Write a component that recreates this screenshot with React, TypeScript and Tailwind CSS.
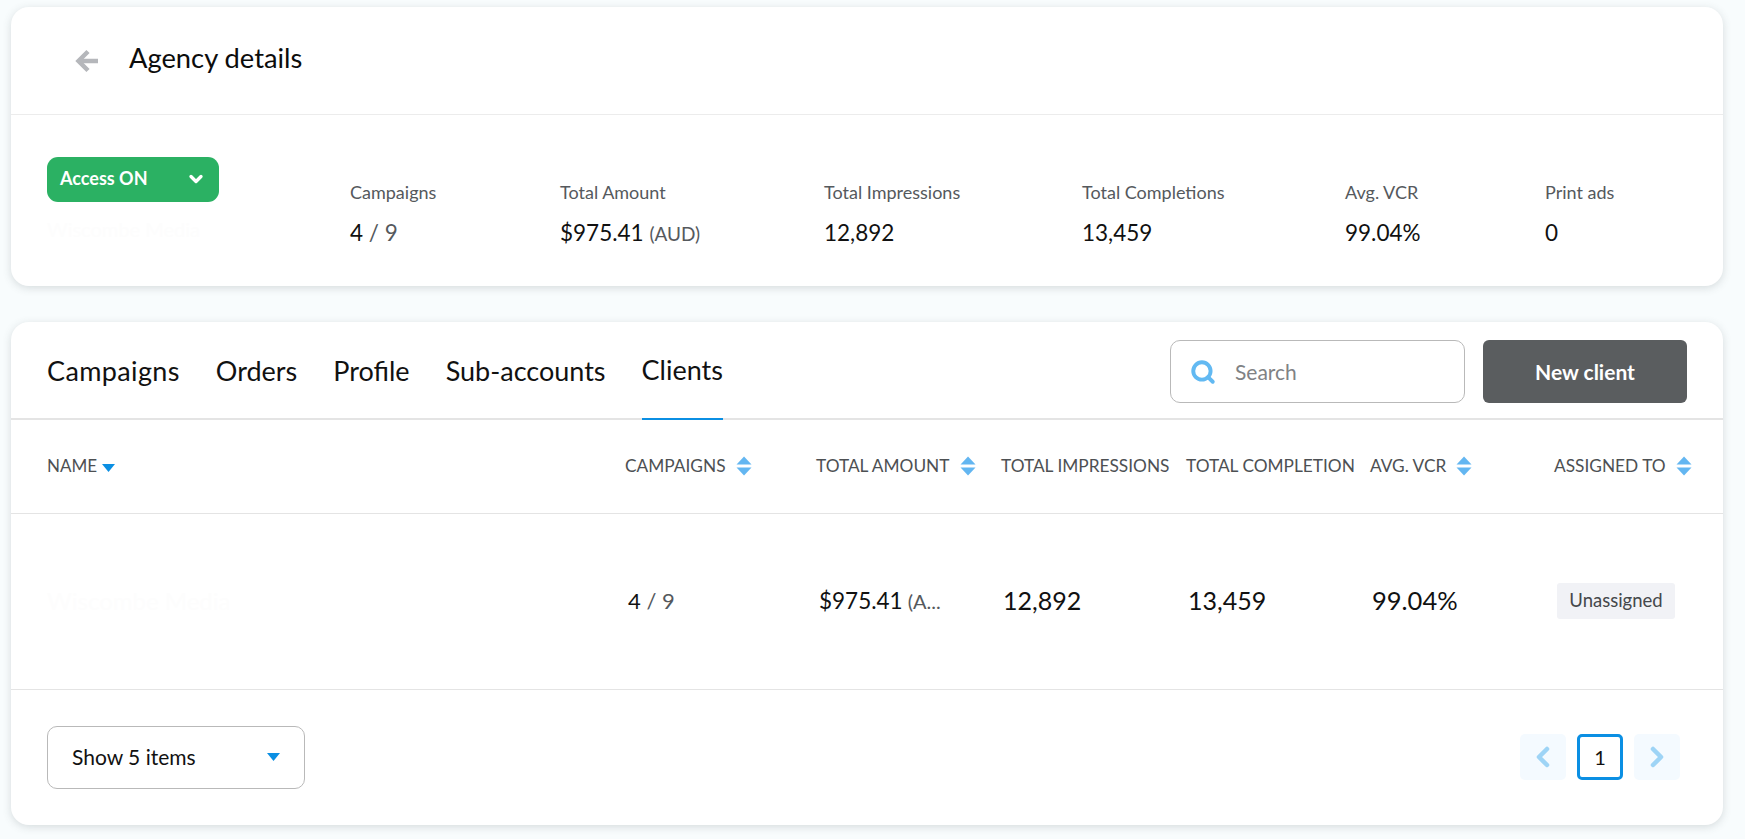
import { ChevronDown, ChevronLeft, ChevronRight, Search } from "lucide-react";

const font = "font-['Lato','Open_Sans',sans-serif]";

function SortIcon() {
  return (
    <svg width="16" height="20" viewBox="0 0 16 20" className="shrink-0 text-[#63b6f1]" fill="currentColor">
      <path d="M8 0.5 15.5 8.5H0.5Z" />
      <path d="M8 19.5 15.5 11.5H0.5Z" />
    </svg>
  );
}

function SortDown() {
  return (
    <svg width="13" height="8" viewBox="0 0 13 8" className="mt-1 shrink-0 text-[#0b8fe3]" fill="currentColor">
      <path d="M0 0H13L6.5 8Z" />
    </svg>
  );
}

function BackArrow() {
  return (
    <svg width="24" height="24" viewBox="0 0 24 24" fill="none" stroke="#b5b7bb" strokeWidth="4.5">
      <path d="M13 2.5 3.5 12l9.5 9.5" />
      <path d="M4 12h19" />
    </svg>
  );
}

function Stat({ label, width, children }: { label: string; width: string; children: React.ReactNode }) {
  return (
    <div className={width}>
      <div className="text-[18px] leading-5 text-[#55595d]">{label}</div>
      <div className="mt-[19px] text-[22.5px] leading-6 text-[#111]">{children}</div>
    </div>
  );
}

function Th({ label, sort = true }: { label: string; sort?: boolean }) {
  return (
    <div className="flex items-center gap-[10px] whitespace-nowrap text-[17.3px] text-[#4d5053]">
      <span>{label}</span>
      {sort && <SortIcon />}
    </div>
  );
}

export default function App() {
  return (
    <div className={`${font} h-[839px] overflow-hidden bg-[#f8fcfd] pl-[11px] pr-[22px] pt-[7px]`}>
      <div className="h-[279px] rounded-[18px] bg-white shadow-[0_2px_8px_rgba(60,70,80,0.18)]">
        <div className="flex h-[108px] items-center border-b border-[#ececec] pl-[64px]">
          <BackArrow />
          <h1 className="mb-[4px] ml-[30px] text-[27.3px] font-normal text-[#0c0c0c]">Agency details</h1>
        </div>
        <div className="flex pl-[36px] pt-[42px]">
          <div className="w-[303px] shrink-0">
            <div className="flex h-[45px] w-[172px] items-center justify-between rounded-[11px] bg-[#2bb163] pb-[2px] pl-[13px] pr-[13px] text-[18px] font-bold text-white">
              Access ON
              <ChevronDown size={20} strokeWidth={4} />
            </div>
            <div className="mt-[12px] text-[20px] text-[#fdfdfd]">Wiscombe Media</div>
          </div>
          <div className="flex pt-[25px]">
            <Stat label="Campaigns" width="w-[210px]">
              4 <span className="text-[#55595d]">/ 9</span>
            </Stat>
            <Stat label="Total Amount" width="w-[264px]">
              $975.41 <span className="text-[19px] text-[#55595d]">(AUD)</span>
            </Stat>
            <Stat label="Total Impressions" width="w-[258px]">12,892</Stat>
            <Stat label="Total Completions" width="w-[263px]">13,459</Stat>
            <Stat label="Avg. VCR" width="w-[200px]">99.04%</Stat>
            <Stat label="Print ads" width="w-[100px]">0</Stat>
          </div>
        </div>
      </div>

      <div className="mt-[36px] h-[503px] rounded-[18px] bg-white shadow-[0_2px_8px_rgba(60,70,80,0.18)]">
        <div className="flex h-[98px] items-start justify-between border-b-2 border-[#e4e4e4] px-[36px]">
          <div className="flex gap-[36px] text-[27px] text-[#111]">
            <div className="flex h-[98px] items-center tracking-[0.37px]">Campaigns</div>
            <div className="flex h-[98px] items-center">Orders</div>
            <div className="flex h-[98px] items-center">Profile</div>
            <div className="flex h-[98px] items-center">Sub-accounts</div>
            <div className="flex h-[98px] items-center border-b-2 border-[#0b8fe3]">Clients</div>
          </div>
          <div className="flex gap-[18px] pt-[18px]">
            <div className="flex h-[63px] w-[295px] items-center rounded-[10px] border border-[#b9b9b9] pl-[19px]">
              <Search size={26} strokeWidth={3.6} className="text-[#62b9f2]" />
              <span className="ml-[19px] text-[21px] text-[#808285]">Search</span>
            </div>
            <div className="flex h-[63px] w-[204px] items-center justify-center rounded-[6px] bg-[#5a5d5f] text-[21px] font-bold text-white">
              New client
            </div>
          </div>
        </div>

        <div className="grid h-[94px] grid-cols-[578px_191px_185px_185px_184px_184px_1fr] items-center border-b border-[#e4e4e4] pb-[2px] pl-[36px]">
          <div className="flex items-center gap-[5px] text-[17px] text-[#4d5053]">
            NAME <SortDown />
          </div>
          <Th label="CAMPAIGNS" />
          <Th label="TOTAL AMOUNT" />
          <Th label="TOTAL IMPRESSIONS" sort={false} />
          <Th label="TOTAL COMPLETION" sort={false} />
          <Th label="AVG. VCR" />
          <Th label="ASSIGNED TO" />
        </div>

        <div className="grid h-[176px] grid-cols-[578px_191px_185px_185px_184px_184px_1fr] items-center border-b border-[#e4e4e4] pb-[2px] pl-[36px] text-[#111]">
          <div className="text-[24px] text-[#fdfdfd]">Wiscombe Media</div>
          <div className="pl-[3px] text-[22px]">
            4 <span className="text-[#55595d]">/ 9</span>
          </div>
          <div className="flex items-baseline gap-[5px] pl-[3px] text-[22.5px]">
            $975.41 <span className="text-[20px] text-[#55595d]">(A...</span>
          </div>
          <div className="pl-[2px] text-[25px]">12,892</div>
          <div className="pl-[2px] text-[25px]">13,459</div>
          <div className="pl-[2px] text-[25.5px]">99.04%</div>
          <div className="pl-[3px]">
            <span className="inline-flex h-[36px] w-[118px] items-center justify-center rounded-[3px] bg-[#f1f2f6] text-[18.5px] text-[#45484b]">
              Unassigned
            </span>
          </div>
        </div>

        <div className="flex h-[134px] items-center justify-between pl-[36px] pr-[43px]">
          <div className="flex h-[63px] w-[258px] items-center justify-between rounded-[10px] border border-[#b9b9b9] px-[24px] text-[21px] text-[#111]">
            Show 5 items
            <svg width="13" height="8" viewBox="0 0 13 8" fill="#0b8fe3">
              <path d="M0 0H13L6.5 8Z" />
            </svg>
          </div>
          <div className="flex items-center gap-[11px]">
            <div className="flex h-[46px] w-[46px] items-center justify-center rounded-[5px] bg-[#f4faff] text-[#9ed4f6]">
              <ChevronLeft size={32} strokeWidth={3.4} />
            </div>
            <div className="flex h-[46px] w-[46px] items-center justify-center rounded-[5px] border-[3px] border-[#0b8fe3] text-[20px] text-[#111]">
              1
            </div>
            <div className="flex h-[46px] w-[46px] items-center justify-center rounded-[5px] bg-[#f4faff] text-[#9ed4f6]">
              <ChevronRight size={32} strokeWidth={3.4} />
            </div>
          </div>
        </div>
      </div>
    </div>
  );
}
